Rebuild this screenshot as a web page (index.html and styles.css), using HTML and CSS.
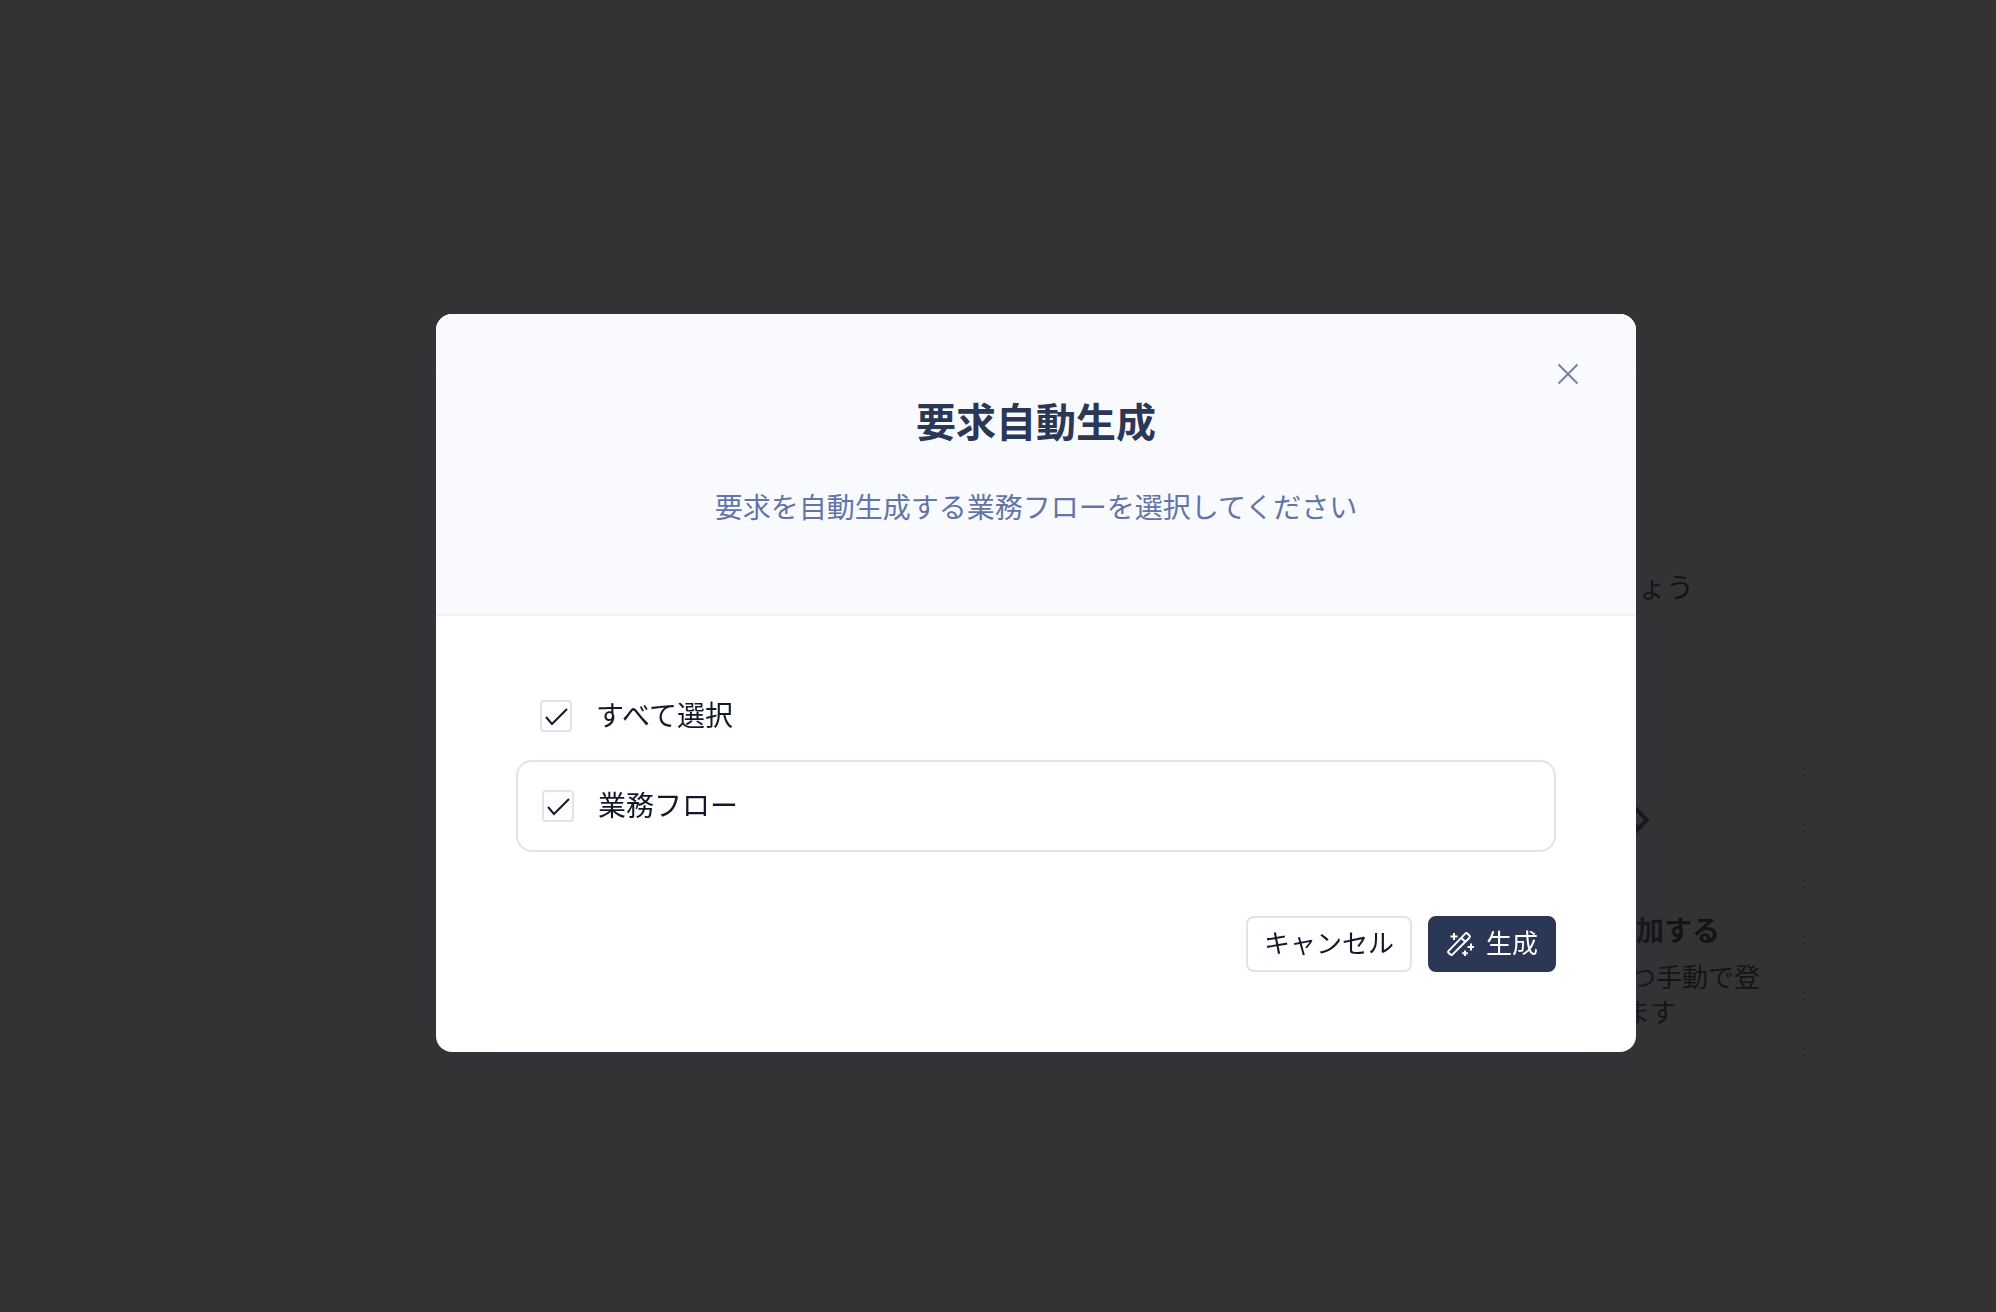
FILE: index.html
```html
<!DOCTYPE html>
<html lang="ja">
<head>
    <meta charset="UTF-8">
    <meta name="viewport" content="width=device-width, initial-scale=1.0">
    <title>要求自動生成</title>
    <link rel="stylesheet" href="styles.css">
</head>
<body>
    <main class="page">
        <div class="guide">
            <p class="guide-lead">ょう</p>
            <section class="guide-card">
                <svg class="guide-icon" viewBox="0 0 28 56" aria-hidden="true">
                    <path d="M8 13L23 28L8 43M8 31L15 36" />
                </svg>
                <h2>加する</h2>
                <p class="guide-text">つ手動で登<br>ます</p>
            </section>
        </div>
    </main>

    <div class="overlay">
        <div class="modal" role="dialog" aria-modal="true" aria-labelledby="modal-title">
            <header class="modal-header">
                <h1 id="modal-title">要求自動生成</h1>
                <p>要求を自動生成する業務フローを選択してください</p>
                <button type="button" class="close" aria-label="閉じる">
                    <svg viewBox="0 0 24 24" aria-hidden="true">
                        <path d="M2.5 2.5L21.5 21.5M21.5 2.5L2.5 21.5" />
                    </svg>
                </button>
            </header>
            <form class="modal-body">
                <label class="option" for="select-all">
                    <span class="check">
                        <input type="checkbox" id="select-all" checked>
                        <svg viewBox="0 0 32 32" aria-hidden="true"><path d="M6 17L12 24L27 9" /></svg>
                    </span>
                    <span class="text">すべて選択</span>
                </label>
                <label class="option option-card" for="flow">
                    <span class="check">
                        <input type="checkbox" id="flow" checked>
                        <svg viewBox="0 0 32 32" aria-hidden="true"><path d="M6 17L12 24L27 9" /></svg>
                    </span>
                    <span class="text">業務フロー</span>
                </label>
                <div class="actions">
                    <button type="button" class="btn"><span class="text">キャンセル</span></button>
                    <button type="button" class="btn btn-primary">
                        <svg viewBox="0 0 28 28" aria-hidden="true">
                            <path d="M2.6 20.9L19.3 3.6Q20.4 2.6 21.5 3.6L23.4 5.5Q24.4 6.6 23.4 7.7L6.6 24.4Q5.5 25.4 4.4 24.4L2.6 22.8Q1.6 21.9 2.6 20.9ZM15.2 7.8L19.2 11.8" />
                            <path d="M8 3V10M4.5 6.5H11.5M25 13.5V20.5M21.5 17H28M19 20.5V26M16.2 23.2H21.8" />
                        </svg>
                        <span class="text">生成</span>
                    </button>
                </div>
            </form>
        </div>
    </div>
</body>
</html>
```

FILE: styles.css
```css
* {
    box-sizing: border-box;
}
body {
    margin: 0;
    background-color: #fff;
    color: #111827;
    font-family: "Noto Sans CJK JP", "Liberation Sans", sans-serif;
    font-size: 28px;
    line-height: 40px;
}
h1, h2, p {
    margin: 0;
}
svg {
    display: block;
    fill: none;
    stroke: currentColor;
    stroke-width: 2;
}

/* page behind the dialog */
.page {
    min-height: 100vh;
    padding: 566px 192px 0 0;
    color: #5f6474;
}
.guide {
    width: 180px;
    margin-left: auto;
}
.guide-lead {
    padding-left: 14px;
}
.guide-card {
    margin-top: 148px;
    padding: 38px 0 32px;
    background: repeating-linear-gradient(#606060 0 1px, transparent 1px 7px) right / 1px 100% no-repeat;
}
.guide-icon {
    width: 28px;
    height: 56px;
    stroke-width: 4;
}
.guide-card h2 {
    margin-top: 61px;
    padding-left: 12px;
    font-size: 28px;
}
.guide-text {
    margin-top: 9px;
    font-size: 26px;
    line-height: 35px;
    text-indent: 6px;
}

/* dialog */
.overlay {
    position: fixed;
    inset: 0;
    display: grid;
    place-items: center;
    padding: 54px 0 0 76px;
    background-color: rgba(0, 0, 0, 0.8);
}
.modal {
    position: relative;
    width: 100%;
    max-width: 1200px;
    overflow: hidden;
    background-color: #fff;
    border-radius: 16px;
    box-shadow: 0 8px 48px rgba(44, 52, 72, 0.4);
}
.modal-header {
    padding: 78px 80px 86px;
    background-color: #f8fafe;
    border-bottom: 2px solid #f0f0f7;
    text-align: center;
}
.modal-header h1 {
    color: #2c3756;
    font-size: 40px;
    line-height: 56px;
}
.modal-header p {
    margin-top: 36px;
    color: #6374a6;
    line-height: 44px;
}
.close {
    position: absolute;
    top: 48px;
    right: 56px;
    width: 24px;
    height: 24px;
    padding: 0;
    border: none;
    background: none;
    color: #7381ab;
    cursor: pointer;
}
.modal-body {
    padding: 80px;
}
.text {
    padding-bottom: 4px;
    line-height: 36px;
}
.option {
    display: flex;
    align-items: center;
    gap: 24px;
    padding-left: 24px;
    cursor: pointer;
}
.option-card {
    margin-top: 24px;
    padding: 24px;
    border: 2px solid #e2e3ea;
    border-radius: 16px;
}
.check {
    display: grid;
    width: 32px;
    height: 32px;
}
.check input,
.check svg {
    grid-area: 1 / 1;
    width: 32px;
    height: 32px;
    margin: 0;
}
.check input {
    appearance: none;
    border: 2px solid #e2e3ea;
    border-radius: 4px;
}
.check svg {
    visibility: hidden;
    pointer-events: none;
}
.check input:checked + svg {
    visibility: visible;
}
.actions {
    display: flex;
    justify-content: flex-end;
    gap: 16px;
    margin-top: 64px;
}
.btn {
    display: flex;
    align-items: center;
    gap: 12px;
    height: 56px;
    padding: 0 16px;
    border: 2px solid #e2e3ea;
    border-radius: 8px;
    background-color: #fff;
    color: #111827;
    font-family: inherit;
    font-size: 26px;
    cursor: pointer;
}
.btn svg {
    width: 28px;
    height: 28px;
}
.btn-primary {
    border-color: #2c3756;
    background-color: #2c3756;
    color: #fff;
}
```
